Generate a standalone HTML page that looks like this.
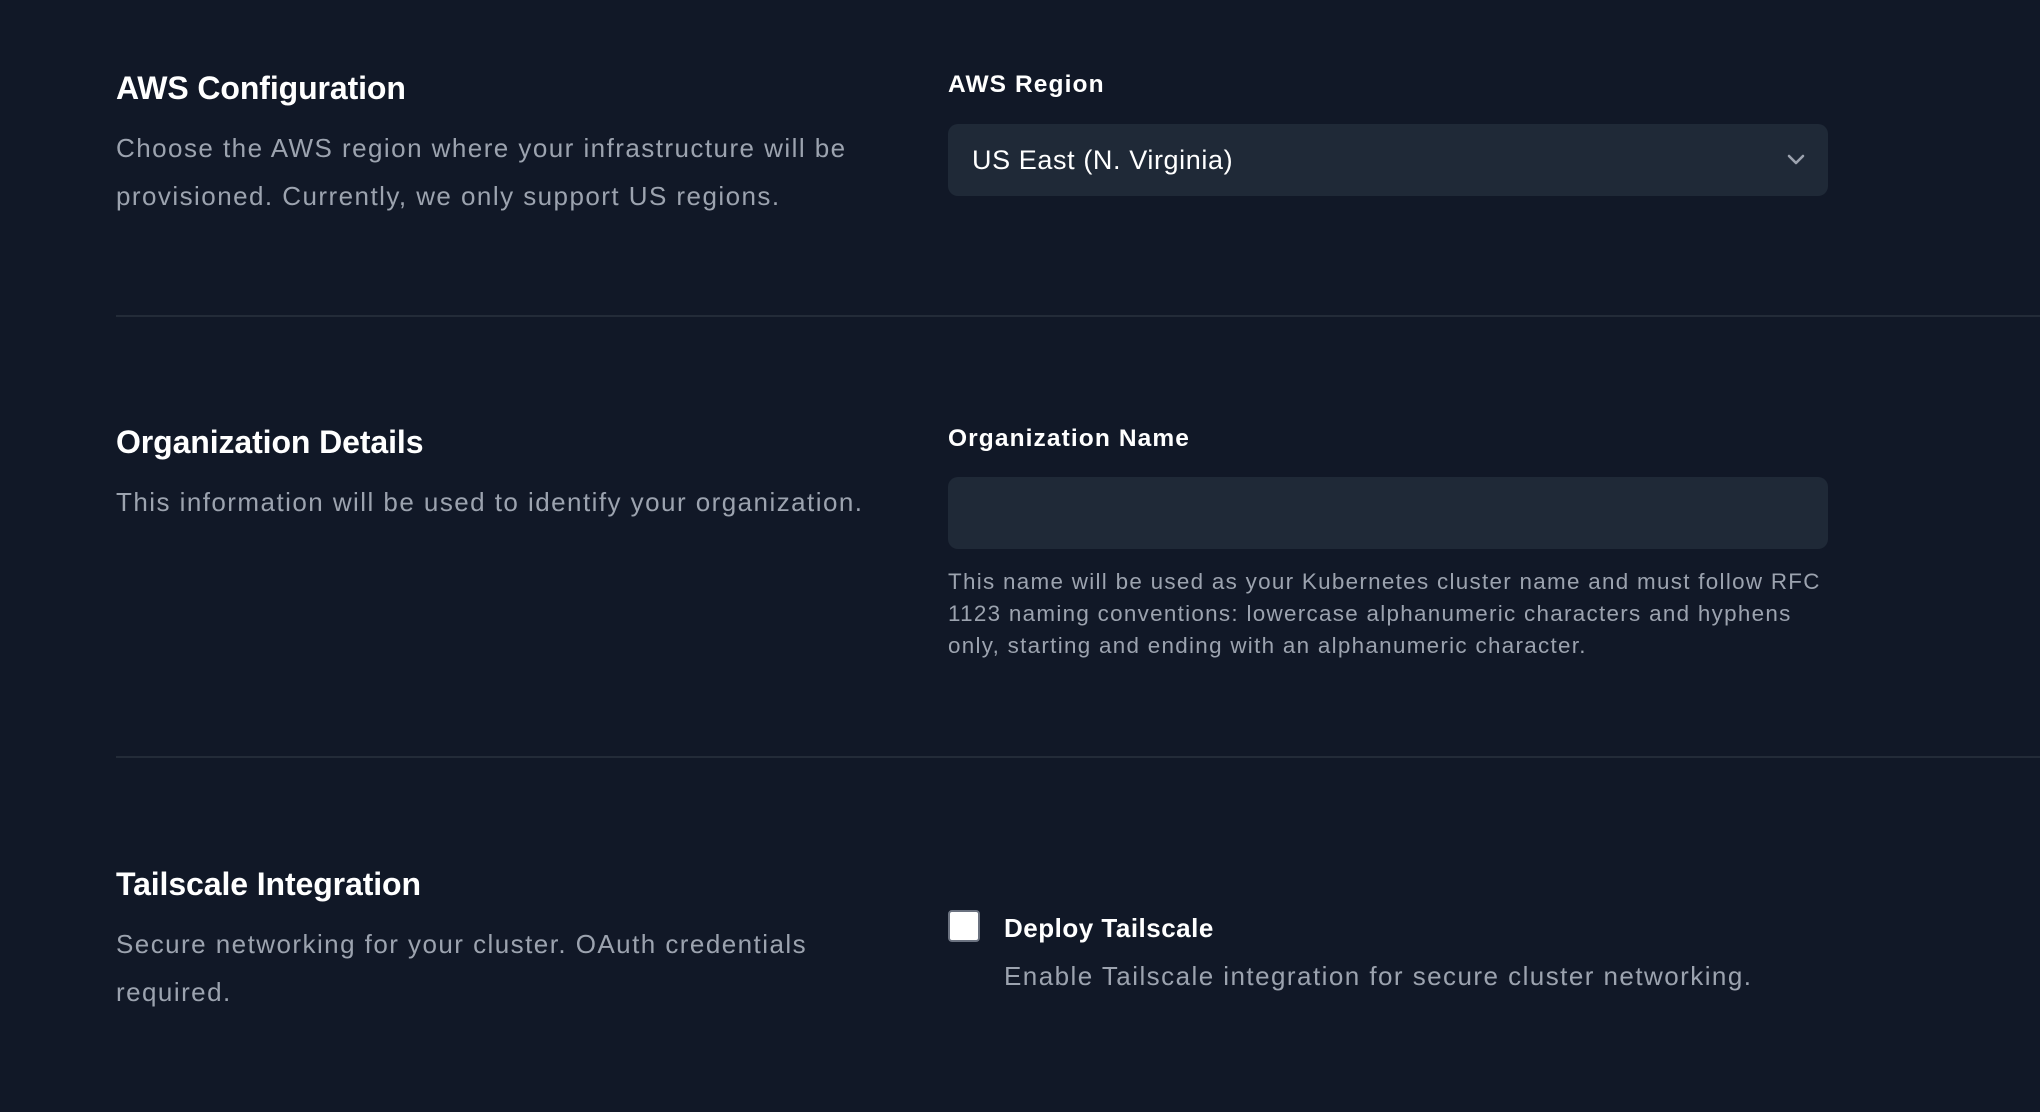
<!DOCTYPE html>
<html><head><meta charset="utf-8"><style>
html,body{margin:0;padding:0;background:#111827;width:2040px;height:1112px;overflow:hidden;font-family:"Liberation Sans",Arial,sans-serif;}
.a{position:absolute;white-space:nowrap;}
h2{position:absolute;margin:0;font-size:32px;font-weight:700;color:#fff;white-space:nowrap;letter-spacing:-0.1px}
.d{color:#9ca3af;font-size:26px;line-height:48px;letter-spacing:1.45px}
.lbl{color:#fff;font-size:24.5px;font-weight:700;letter-spacing:1.1px}
.box{position:absolute;left:948px;width:880px;height:72px;background:#1f2937;border-radius:10px;}
.hr{position:absolute;left:116px;right:0;height:2px;background:#232b38;}
.h{color:#9ca3af;font-size:22.4px;line-height:32px;letter-spacing:1.3px}
</style></head><body>
<h2 style="left:116px;top:70px">AWS Configuration</h2>
<div class="a d" style="left:116px;top:124px">Choose the AWS region where your infrastructure will be<br>provisioned. Currently, we only support US regions.</div>
<div class="a lbl" style="left:948px;top:71px">AWS Region</div>
<div class="box" style="top:124px"><div class="a" style="left:24px;top:21px;color:#fff;font-size:27px;letter-spacing:0.6px">US East (N. Virginia)</div>
<svg class="a" style="left:838px;top:28px" width="20" height="16" viewBox="0 0 20 16"><path d="M3 4l7 7 7-7" fill="none" stroke="#9ca3af" stroke-width="2.6" stroke-linecap="round" stroke-linejoin="round"/></svg></div>
<div class="hr" style="top:315px"></div>
<h2 style="left:116px;top:424px">Organization Details</h2>
<div class="a d" style="left:116px;top:478px">This information will be used to identify your organization.</div>
<div class="a lbl" style="left:948px;top:425px">Organization Name</div>
<div class="box" style="top:477px"></div>
<div class="a h" style="left:948px;top:566px">This name will be used as your Kubernetes cluster name and must follow RFC<br>1123 naming conventions: lowercase alphanumeric characters and hyphens<br>only, starting and ending with an alphanumeric character.</div>
<div class="hr" style="top:756px"></div>
<h2 style="left:116px;top:866px">Tailscale Integration</h2>
<div class="a d" style="left:116px;top:920px">Secure networking for your cluster. OAuth credentials<br>required.</div>
<div class="a" style="left:948px;top:910px;width:32px;height:32px;background:#fff;border:2px solid #6b7280;border-radius:4px;box-sizing:border-box"></div>
<div class="a lbl" style="left:1004px;top:913px;font-size:26px;letter-spacing:0.5px">Deploy Tailscale</div>
<div class="a d" style="left:1004px;top:952px">Enable Tailscale integration for secure cluster networking.</div>
</body></html>
